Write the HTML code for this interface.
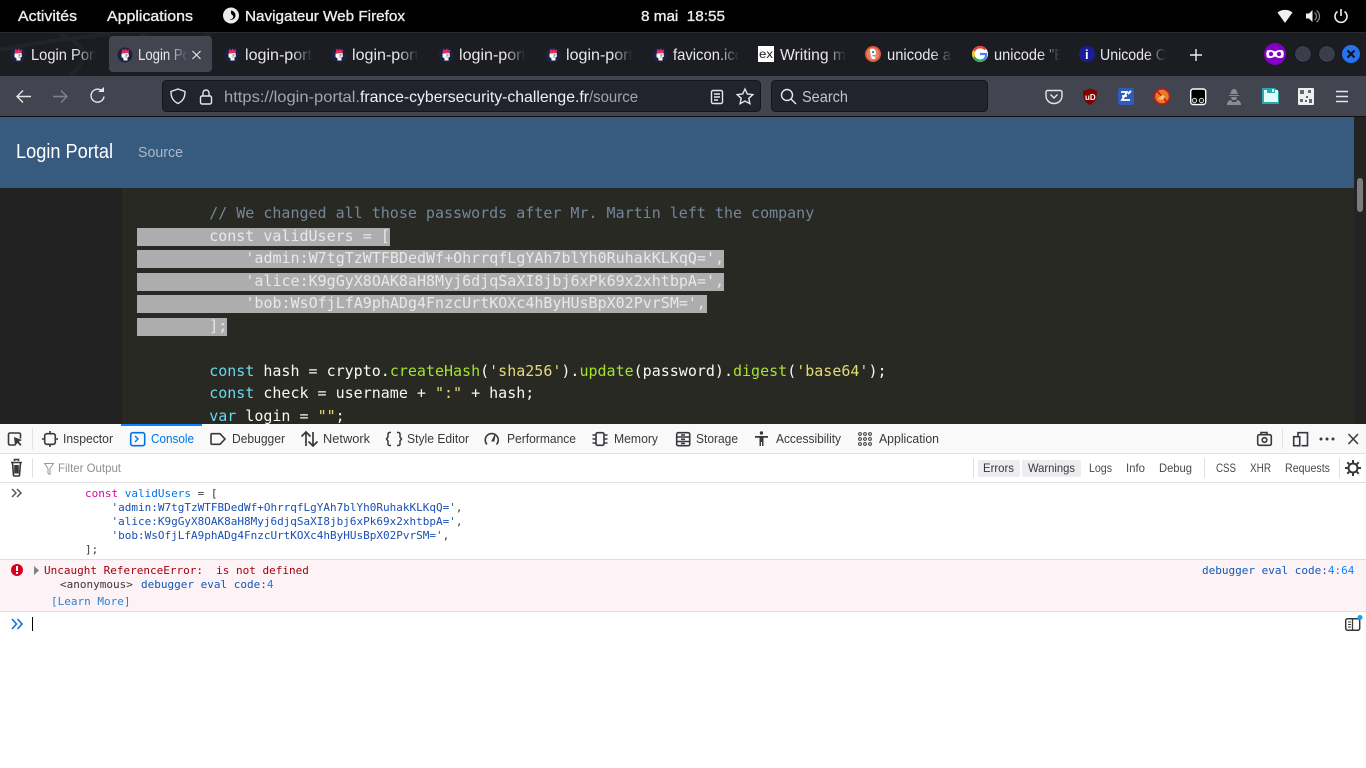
<!DOCTYPE html>
<html><head><meta charset="utf-8"><title>Login Portal</title>
<style>
html,body{margin:0;padding:0;width:1366px;height:768px;overflow:hidden;background:#fff}
svg{display:block}
text{white-space:pre}
.s{font-family:"Liberation Sans",sans-serif}
.top{font-size:15px;fill:#ececec;stroke:#ececec;stroke-width:.35}
.tab{font-size:16px;fill:#e8e8ea}
.dt{font-size:13px;fill:#38383d}
.fl{font-size:12px;fill:#4a4a4f}
.m{font-family:"DejaVu Sans Mono","Liberation Mono",monospace}
.c{font-size:15px;fill:#f8f8f2}
.sel{font-size:15px;fill:#e8e8e8}
.k{fill:#66d9ef}.f{fill:#a6e22e}.y{fill:#e6db74}
.l{font-size:11px;fill:#38383d}
.mg{fill:#dd00a9}.bl{fill:#0074e8}.st{fill:#1a4fb5}.lk{fill:#0e59b8}
.i{fill:none;stroke:#38383d;stroke-width:1.6}
.w{fill:none;stroke:#e6e6e8;stroke-width:1.4}
</style></head><body>
<svg width="1366" height="768" viewBox="0 0 1366 768" xmlns="http://www.w3.org/2000/svg">
<defs>
<symbol id="fav" viewBox="0 0 16 16">
<circle cx="8" cy="8" r="7.500" fill="#1a2244"/>
<path d="M4.500 6L5.500 1.800 7.300 3.500 8.800 1.500 10 3.500 12 2.500 11.500 6.500Z" fill="#ea2c5a"/>
<path d="M4.500 6.500L11.500 6 12 9.500 10.500 10.500 10.500 13.500 6.500 13.500 6.500 11.500 4.500 10Z" fill="#f6f6f6"/>
<path d="M8.500 8h2M8.500 10h1" stroke="#1a2244" stroke-width=".7"/>
</symbol>
<linearGradient id="fd"><stop offset="0" stop-color="#1c1d23" stop-opacity="0"/><stop offset="1" stop-color="#1c1d23"/></linearGradient>
<linearGradient id="fa"><stop offset="0" stop-color="#42454f" stop-opacity="0"/><stop offset="1" stop-color="#42454f"/></linearGradient>
</defs>

<!-- page -->
<rect x="0" y="117" width="1366" height="308" fill="#222"/>
<rect x="122" y="188" width="1232" height="237" fill="#282923"/>
<rect x="0" y="117" width="1354" height="71" fill="#375a7f"/>
<rect x="1354" y="117" width="12" height="308" fill="#232323"/>
<rect x="1357" y="178" width="6" height="34" rx="3" fill="#7c7c7c"/>
<text class="s" x="16" y="158" font-size="20" fill="#fff" textLength="97" lengthAdjust="spacingAndGlyphs">Login Portal</text>
<text class="s" x="138" y="157" font-size="15" fill="#a9b9cb" textLength="45" lengthAdjust="spacingAndGlyphs">Source</text>

<!-- code -->
<rect x="137" y="228" width="253" height="18" fill="#adadad"/>
<rect x="137" y="250" width="587" height="18" fill="#adadad"/>
<rect x="137" y="273" width="587" height="18" fill="#adadad"/>
<rect x="137" y="295" width="570" height="18" fill="#adadad"/>
<rect x="137" y="318" width="90" height="18" fill="#adadad"/>
<text class="m c" x="209.2" y="218" style="fill:#75859a">// We changed all those passwords after Mr. Martin left the company</text>
<text class="m sel" x="209.2" y="241">const validUsers = [</text>
<text class="m sel" x="245.4" y="263">'admin:W7tgTzWTFBDedWf+OhrrqfLgYAh7blYh0RuhakKLKqQ=',</text>
<text class="m sel" x="245.4" y="286">'alice:K9gGyX8OAK8aH8Myj6djqSaXI8jbj6xPk69x2xhtbpA=',</text>
<text class="m sel" x="245.4" y="308">'bob:WsOfjLfA9phADg4FnzcUrtKOXc4hByHUsBpX02PvrSM=',</text>
<text class="m sel" x="209.2" y="331">];</text>
<text class="m c" x="209.2" y="376"><tspan class="k">const</tspan> hash = crypto.<tspan class="f">createHash</tspan>(<tspan class="y">'sha256'</tspan>).<tspan class="f">update</tspan>(password).<tspan class="f">digest</tspan>(<tspan class="y">'base64'</tspan>);</text>
<text class="m c" x="209.2" y="398"><tspan class="k">const</tspan> check = username + <tspan class="y">":"</tspan> + hash;</text>
<text class="m c" x="209.2" y="421"><tspan class="k">var</tspan> login = <tspan class="y">""</tspan>;</text>

<!-- gnome bar -->
<rect width="1366" height="33" fill="#000"/>
<text class="s top" x="18" y="21" textLength="59" lengthAdjust="spacingAndGlyphs">Activités</text>
<text class="s top" x="107" y="21" textLength="86" lengthAdjust="spacingAndGlyphs">Applications</text>
<circle cx="231" cy="15.500" r="8" fill="#ececec"/>
<path d="M231 10.500a5 5 0 0 1 4.500 5.500 4.500 4.500 0 0 1-6 3.500 5 5 0 0 0 3.500-1.500c1-2-1-3.500-2-4z" fill="#000"/>
<text class="s top" x="245" y="21" textLength="160" lengthAdjust="spacingAndGlyphs">Navigateur Web Firefox</text>
<text class="s top" x="641" y="21" textLength="84" lengthAdjust="spacingAndGlyphs">8 mai  18:55</text>
<path d="M1277.500 12.500a12 12 0 0 1 15 0L1285 23z" fill="#f0f0f0"/>
<path d="M1306 13.500h3l3.500-3.500v12l-3.500-3.500h-3z" fill="#f0f0f0"/>
<path d="M1314.500 12.500a4.500 4.500 0 0 1 0 7.500M1316.500 10.500a7 7 0 0 1 0 11.500" fill="none" stroke="#888" stroke-width="1.300"/>
<path d="M1337.500 11.500a6 6 0 1 0 7 0M1341 9v7" fill="none" stroke="#f0f0f0" stroke-width="1.600"/>

<!-- tab bar -->
<rect y="33" width="1366" height="43" fill="#1c1d23"/>
<rect y="32" width="1366" height="1" fill="#2b2c31"/>
<path d="M0 50Q50 40 110 34M70 76Q100 50 60 34M140 34Q180 50 210 34" fill="none" stroke="#232429" stroke-width="4"/>
<rect x="109" y="36" width="103" height="36" rx="4" fill="#42454f"/>
<g class="s tab">
<text x="31" y="60" textLength="67" lengthAdjust="spacingAndGlyphs">Login Port</text>
<text x="138" y="60" textLength="52" lengthAdjust="spacingAndGlyphs">Login Po</text>
<text x="245" y="60" textLength="67" lengthAdjust="spacingAndGlyphs">login-port</text>
<text x="352" y="60" textLength="67" lengthAdjust="spacingAndGlyphs">login-port</text>
<text x="459" y="60" textLength="67" lengthAdjust="spacingAndGlyphs">login-port</text>
<text x="566" y="60" textLength="67" lengthAdjust="spacingAndGlyphs">login-port</text>
<text x="673" y="60" textLength="70" lengthAdjust="spacingAndGlyphs">favicon.ico</text>
<text x="780" y="60" textLength="66" lengthAdjust="spacingAndGlyphs">Writing m</text>
<text x="887" y="60" textLength="64" lengthAdjust="spacingAndGlyphs">unicode a</text>
<text x="994" y="60" textLength="70" lengthAdjust="spacingAndGlyphs">unicode "E</text>
<text x="1100" y="60" textLength="66" lengthAdjust="spacingAndGlyphs">Unicode C</text>
</g>
<!-- fades -->
<rect x="76" y="38" width="20" height="32" fill="url(#fd)"/><rect x="96" y="38" width="13" height="32" fill="#1c1d23"/>
<rect x="168" y="38" width="20" height="32" fill="url(#fa)"/><rect x="188" y="38" width="4" height="32" fill="#42454f"/>
<rect x="292" y="38" width="20" height="32" fill="url(#fd)"/><rect x="312" y="38" width="16" height="32" fill="#1c1d23"/>
<rect x="398" y="38" width="20" height="32" fill="url(#fd)"/><rect x="418" y="38" width="16" height="32" fill="#1c1d23"/>
<rect x="505" y="38" width="20" height="32" fill="url(#fd)"/><rect x="525" y="38" width="16" height="32" fill="#1c1d23"/>
<rect x="612" y="38" width="20" height="32" fill="url(#fd)"/><rect x="632" y="38" width="16" height="32" fill="#1c1d23"/>
<rect x="719" y="38" width="20" height="32" fill="url(#fd)"/><rect x="739" y="38" width="16" height="32" fill="#1c1d23"/>
<rect x="826" y="38" width="20" height="32" fill="url(#fd)"/><rect x="846" y="38" width="14" height="32" fill="#1c1d23"/>
<rect x="932" y="38" width="20" height="32" fill="url(#fd)"/><rect x="952" y="38" width="14" height="32" fill="#1c1d23"/>
<rect x="1040" y="38" width="20" height="32" fill="url(#fd)"/><rect x="1060" y="38" width="14" height="32" fill="#1c1d23"/>
<rect x="1146" y="38" width="20" height="32" fill="url(#fd)"/><rect x="1166" y="38" width="14" height="32" fill="#1c1d23"/>
<path d="M192.500 51l8 8M200.500 51l-8 8" stroke="#e8e8ea" stroke-width="1.100"/>
<use href="#fav" x="10" y="47" width="16" height="16"/>
<use href="#fav" x="117" y="47" width="16" height="16"/>
<use href="#fav" x="224" y="47" width="16" height="16"/>
<use href="#fav" x="331" y="47" width="16" height="16"/>
<use href="#fav" x="438" y="47" width="16" height="16"/>
<use href="#fav" x="545" y="47" width="16" height="16"/>
<use href="#fav" x="652" y="47" width="16" height="16"/>
<rect x="758" y="46" width="16" height="16" fill="#fff"/>
<text class="s" x="759" y="58" font-size="12" fill="#222" textLength="14" lengthAdjust="spacingAndGlyphs">ex</text>
<circle cx="873" cy="54" r="8" fill="#de5833"/><circle cx="873" cy="54" r="6.300" fill="#fff" fill-opacity=".25"/><path d="M870 49q5-1 6 3l-1 7h-3q-2-5-2-10z" fill="#fff"/><circle cx="873" cy="52" r="1" fill="#2d4f8e"/><path d="M872 55h4l-2 2z" fill="#65bc46"/>
<circle cx="980" cy="54" r="8" fill="#fff"/>
<path d="M985.500 49.500A7 7 0 0 0 974 51" fill="none" stroke="#ea4335" stroke-width="2.400"/><path d="M974 51a7 7 0 0 0 0 6" fill="none" stroke="#fbbc05" stroke-width="2.400"/><path d="M974 57a7 7 0 0 0 10 2.500" fill="none" stroke="#34a853" stroke-width="2.400"/><path d="M980 54h6a6 6 0 0 1-2 5.500" fill="none" stroke="#4285f4" stroke-width="2.200"/>
<circle cx="1087" cy="54" r="8" fill="#1b1c99"/>
<text class="s" x="1085" y="59" font-size="13" font-weight="bold" fill="#fff">i</text>
<path d="M1196 49v12M1190 55h12" stroke="#f0f0f0" stroke-width="1.400"/>
<circle cx="1275" cy="54" r="11" fill="#8000c4"/>
<path d="M1267 50.500q4-1.500 8 1 4-2.500 8-1 1.500 3.500 0 7-4 1.500-8-1-4 2.500-8 1-1.500-3.500 0-7z" fill="#fff"/>
<circle cx="1271" cy="54" r="2.200" fill="#8000c4"/><circle cx="1279" cy="54" r="2.200" fill="#8000c4"/>
<circle cx="1303" cy="54" r="8.500" fill="#3a3e4a" stroke="#15161a"/>
<circle cx="1327" cy="54" r="8.500" fill="#3a3e4a" stroke="#15161a"/>
<circle cx="1351" cy="54" r="9" fill="#2673f0"/>
<path d="M1347.500 50.500l7 7M1354.500 50.500l-7 7" stroke="#14151a" stroke-width="2.200"/>

<!-- nav toolbar -->
<rect y="76" width="1366" height="40" fill="#42454f"/>
<rect y="116" width="1366" height="1" fill="#111"/>
<path d="M17 96.500h14M23 90.500l-6 6 6 6" class="w"/>
<path d="M53 96.500h14M61 90.500l6 6-6 6" fill="none" stroke="#80828a" stroke-width="1.400"/>
<path d="M102.500 91.500a6.500 6.500 0 1 0 1.500 5" class="w"/><path d="M98 92h6v-5z" fill="#e6e6e8"/>
<rect x="162.500" y="80.500" width="598" height="31" rx="4" fill="#22242d" stroke="#15161b"/>
<rect x="771.500" y="80.500" width="216" height="31" rx="4" fill="#22242d" stroke="#15161b"/>
<path d="M178 89l7 2.500c0 6-2 9.500-7 12-5-2.500-7-6-7-12z" class="w"/>
<rect x="200.500" y="96" width="11" height="8" rx="1.500" class="w"/><path d="M203 96v-3a3 3 0 0 1 6 0v3" class="w"/>
<text class="s" x="224" y="102" font-size="16" fill="#a3a5ab" textLength="136" lengthAdjust="spacingAndGlyphs">https://login-portal.</text>
<text class="s" x="360" y="102" font-size="16" fill="#f0f0f2" textLength="229" lengthAdjust="spacingAndGlyphs">france-cybersecurity-challenge.fr</text>
<text class="s" x="589" y="102" font-size="16" fill="#a3a5ab" textLength="49" lengthAdjust="spacingAndGlyphs">/source</text>
<rect x="711.500" y="90.500" width="11" height="13" rx="1.500" class="w"/><path d="M714 94h6M714 97h6M714 100h4" class="w" stroke-width="1"/>
<path d="M745 89l2.300 5 5.500.6-4 3.700 1.100 5.400-4.900-2.700-4.900 2.700 1.100-5.400-4-3.700 5.500-.6z" class="w"/>
<circle cx="787" cy="95" r="5.500" class="w"/><path d="M791 99l5 5" class="w"/>
<text class="s" x="802" y="102" font-size="16" fill="#c4c5ca" textLength="46" lengthAdjust="spacingAndGlyphs">Search</text>
<path d="M1047.500 90.500h13a1.500 1.500 0 0 1 1.500 1.500v4a8 7.500 0 0 1-16 0v-4a1.500 1.500 0 0 1 1.500-1.500z" class="w"/><path d="M1050.500 94.500l3.500 3.500 3.500-3.500" class="w"/>
<path d="M1090 88.500l7 2.500c0 7-1.500 11-7 14-5.500-3-7-7-7-14z" fill="#800000"/>
<text class="s" x="1085" y="100" font-size="8" font-weight="bold" fill="#fff">uD</text>
<rect x="1118" y="88" width="16" height="17" rx="2.500" fill="#2e5cb8"/>
<path d="M1121 92h6l-5 8h8M1122 96h5M1128 94l3-3" fill="none" stroke="#fff" stroke-width="1.800"/>
<circle cx="1162" cy="96.500" r="7.500" fill="#e87d1e"/><circle cx="1162" cy="96.500" r="7.500" fill="none" stroke="#c9151e" stroke-width="1.600"/><path d="M1157 91l10 11" stroke="#c9151e" stroke-width="1.600"/><path d="M1158 99l4-4 3 1-2 4z" fill="#f4c27a"/>
<rect x="1190.700" y="89" width="15" height="15.500" rx="2.500" fill="#000" stroke="#fff" stroke-width="1.400"/>
<circle cx="1194.500" cy="100.500" r="2.200" fill="#222" stroke="#ddd"/><circle cx="1201.500" cy="100.500" r="2.200" fill="#222" stroke="#ddd"/>
<path d="M1231 92a3 3 0 0 1 6 0l1 2h-8zM1229 95h10v1h-10zM1231 97h6l-1 3h-4zM1227 105c0-3 2-5 4-5l1 2h4l1-2c2 0 4 2 4 5z" fill="#8a8c90"/>
<path d="M1262 88h13l4 4v12h-17z" fill="#2aa9a9"/><path d="M1264 90h14v12h-14z" fill="#e4fbfb"/><path d="M1267 88h8v5h-8z" fill="#2aa9a9"/><path d="M1272 89h2v3h-2z" fill="#e4fbfb"/>
<rect x="1298" y="88" width="16" height="17" rx="1" fill="#efefef"/>
<path d="M1300 90h4v4h-4zM1308 90h3v3h-3zM1300 99h3v3h-3zM1306 96h2v2h-2zM1309 99h3v4h-3zM1305 100h2v2h-2z" fill="#666"/>
<path d="M1336 91.500h12M1336 96.500h12M1336 101.500h12" stroke="#e6e6e8" stroke-width="1.400"/>

<!-- devtools -->
<rect y="424" width="1366" height="344" fill="#fff"/>
<rect y="424" width="1366" height="29" fill="#f9f9fa"/>
<rect y="453" width="1366" height="1" fill="#e0e0e2"/>
<rect y="482" width="1366" height="1" fill="#e0e0e2"/>
<rect x="121" y="424" width="81" height="2" fill="#0a84ff"/>
<rect x="32" y="428" width="1" height="21" fill="#e0e0e2"/>
<rect x="1282" y="428" width="1" height="21" fill="#e0e0e2"/>
<path d="M15 445h-5a1.500 1.500 0 0 1-1.500-1.500v-9A1.500 1.500 0 0 1 10 433h9a1.500 1.500 0 0 1 1.500 1.500v4" class="i"/>
<path d="M14 437l8 3-3.200 1.600 2.700 3-1.300 1.300-2.700-3L15 446z" fill="#38383d"/>
<rect x="44.700" y="433.700" width="10.600" height="10.600" rx="2" class="i"/><path d="M50 431v2.500M50 444.500v2.500M42 439h2.500M55.500 439H58" class="i"/>
<rect x="130.700" y="432.700" width="14" height="13" rx="2" fill="none" stroke="#0074e8" stroke-width="1.600"/><path d="M135 436l3 3-3 3" fill="none" stroke="#0074e8" stroke-width="1.400"/>
<path d="M212 433.700h8l5 5.300-5 5.300h-8a1 1 0 0 1-1-1v-8.600a1 1 0 0 1 1-1z" class="i"/>
<path d="M306 446v-14M301.500 436.500l4.500-4.500 4.500 4.500M313 432v14M308.500 441.500l4.500 4.500 4.500-4.500" fill="none" stroke="#38383d" stroke-width="1.700"/>
<path d="M391 432.500h-1.500a1.500 1.500 0 0 0-1.500 1.500v3l-1.500 2 1.500 2v3a1.500 1.500 0 0 0 1.500 1.500h1.500M397 432.500h1.500a1.500 1.500 0 0 1 1.500 1.500v3l1.500 2-1.500 2v3a1.500 1.500 0 0 1-1.500 1.500H397" fill="none" stroke="#38383d" stroke-width="1.500"/>
<path d="M487 444.500a6.500 6.500 0 1 1 9.500 0" class="i"/><path d="M492 441l3-6-1 6z" fill="#38383d" stroke="#38383d"/>
<rect x="596" y="432.700" width="8" height="12.600" rx="1.500" class="i"/><path d="M592.500 435h3M592.500 439h3M592.500 443h3M604.500 435h3M604.500 439h3M604.500 443h3" class="i" stroke-width="1.100"/>
<rect x="676.700" y="432.700" width="13" height="13" rx="1.500" class="i"/><path d="M677 437h12.500M677 441.500h12.500M681 435h4M681 439.300h4M681 443.500h4" class="i" stroke-width="1.100"/>
<circle cx="761.500" cy="433" r="1.700" fill="#38383d"/><path d="M755 436h13v1.800h-4.500v8.200h-1.500v-4h-1v4H759.500v-8.200H755z" fill="#38383d"/>
<g fill="none" stroke="#38383d" stroke-width="1"><circle cx="860" cy="434" r="1.400"/><circle cx="865" cy="434" r="1.400"/><circle cx="870" cy="434" r="1.400"/><circle cx="860" cy="439" r="1.400"/><circle cx="865" cy="439" r="1.400"/><circle cx="870" cy="439" r="1.400"/><circle cx="860" cy="444" r="1.400"/><circle cx="865" cy="444" r="1.400"/><circle cx="870" cy="444" r="1.400"/></g>
<g class="s dt">
<text x="63" y="443" textLength="50" lengthAdjust="spacingAndGlyphs">Inspector</text>
<text x="151" y="443" textLength="43" lengthAdjust="spacingAndGlyphs" style="fill:#0074e8">Console</text>
<text x="232" y="443" textLength="53" lengthAdjust="spacingAndGlyphs">Debugger</text>
<text x="323" y="443" textLength="47" lengthAdjust="spacingAndGlyphs">Network</text>
<text x="407" y="443" textLength="62" lengthAdjust="spacingAndGlyphs">Style Editor</text>
<text x="507" y="443" textLength="69" lengthAdjust="spacingAndGlyphs">Performance</text>
<text x="614" y="443" textLength="44" lengthAdjust="spacingAndGlyphs">Memory</text>
<text x="696" y="443" textLength="42" lengthAdjust="spacingAndGlyphs">Storage</text>
<text x="776" y="443" textLength="65" lengthAdjust="spacingAndGlyphs">Accessibility</text>
<text x="879" y="443" textLength="60" lengthAdjust="spacingAndGlyphs">Application</text>
</g>
<rect x="1257.700" y="434.700" width="13.600" height="10.600" rx="1.500" class="i"/><path d="M1261 434.500v-2h6v2" class="i"/><circle cx="1264.500" cy="440" r="2.300" class="i"/>
<rect x="1293.700" y="436.700" width="6" height="9" class="i"/><path d="M1298 436v-3.300h9.500v13h-6" class="i"/>
<circle cx="1321" cy="439" r="1.500" fill="#38383d"/><circle cx="1327" cy="439" r="1.500" fill="#38383d"/><circle cx="1333" cy="439" r="1.500" fill="#38383d"/>
<path d="M1348.500 434l9.500 10M1358 434l-9.500 10" fill="none" stroke="#38383d" stroke-width="1.500"/>

<!-- filter bar -->
<rect x="32" y="458" width="1" height="20" fill="#e0e0e2"/>
<path d="M11 462.500h11M12.500 462.500l1 12.500a1 1 0 0 0 1 1h4a1 1 0 0 0 1-1l1-12.500M14.500 461v-1.500h4v1.500" class="i" stroke-width="1.500"/>
<path d="M15 465v8.500M16.500 465v8.500M18 465v8.500" class="i" stroke-width=".9"/>
<path d="M44.500 463.500h9l-3.500 5v6l-2-1.200v-4.800z" fill="none" stroke="#9a9a9f" stroke-width="1"/>
<text class="s" x="58" y="472" font-size="12" fill="#8f8f94" textLength="63" lengthAdjust="spacingAndGlyphs">Filter Output</text>
<rect x="973" y="458" width="1" height="20" fill="#e0e0e2"/>
<rect x="978" y="460" width="42" height="17" rx="2" fill="#ededf0"/>
<rect x="1022" y="460" width="59" height="17" rx="2" fill="#ededf0"/>
<rect x="1204" y="458" width="1" height="20" fill="#e0e0e2"/>
<rect x="1339" y="458" width="1" height="20" fill="#e0e0e2"/>
<g class="s fl">
<text x="983" y="472" textLength="31" lengthAdjust="spacingAndGlyphs" style="fill:#38383d">Errors</text>
<text x="1028" y="472" textLength="47" lengthAdjust="spacingAndGlyphs" style="fill:#38383d">Warnings</text>
<text x="1089" y="472" textLength="23" lengthAdjust="spacingAndGlyphs">Logs</text>
<text x="1126" y="472" textLength="19" lengthAdjust="spacingAndGlyphs">Info</text>
<text x="1159" y="472" textLength="33" lengthAdjust="spacingAndGlyphs">Debug</text>
<text x="1216" y="472" textLength="20" lengthAdjust="spacingAndGlyphs">CSS</text>
<text x="1250" y="472" textLength="21" lengthAdjust="spacingAndGlyphs">XHR</text>
<text x="1285" y="472" textLength="45" lengthAdjust="spacingAndGlyphs">Requests</text>
</g>
<circle cx="1353" cy="468" r="4.500" fill="none" stroke="#38383d" stroke-width="2"/>
<path d="M1353 460v3M1353 473v3M1345 468h3M1358 468h3M1347.300 462.300l2 2M1356.700 471.700l2 2M1358.700 462.300l-2 2M1349.300 471.700l-2 2" stroke="#38383d" stroke-width="2"/>

<!-- console -->
<path d="M12 489l4 4-4 4M17 489l4 4-4 4" fill="none" stroke="#55555a" stroke-width="1.500"/>
<g class="m l">
<text x="85" y="497"><tspan class="mg">const</tspan> <tspan class="bl">validUsers</tspan> = [</text>
<text x="111.500" y="511"><tspan class="st">'admin:W7tgTzWTFBDedWf+OhrrqfLgYAh7blYh0RuhakKLKqQ='</tspan>,</text>
<text x="111.500" y="525"><tspan class="st">'alice:K9gGyX8OAK8aH8Myj6djqSaXI8jbj6xPk69x2xhtbpA='</tspan>,</text>
<text x="111.500" y="539"><tspan class="st">'bob:WsOfjLfA9phADg4FnzcUrtKOXc4hByHUsBpX02PvrSM='</tspan>,</text>
<text x="85" y="553">];</text>
</g>
<rect y="559" width="1366" height="52" fill="#fdf2f5"/>
<rect y="559" width="1366" height="1" fill="#fbd0d8"/>
<rect y="611" width="1366" height="1" fill="#e0e0e2"/>
<circle cx="17" cy="570" r="6" fill="#d70022"/>
<rect x="16" y="566" width="2" height="5" fill="#fff"/><rect x="16" y="572" width="2" height="2" fill="#fff"/>
<path d="M34 566l5 4.500-5 4.500z" fill="#808085"/>
<g class="m l">
<text x="44" y="574" style="fill:#a4000f">Uncaught ReferenceError:  is not defined</text>
<text x="60" y="588">&lt;anonymous&gt;</text>
<text x="141" y="588" class="lk">debugger eval code:<tspan style="fill:#0a84ff">4</tspan></text>
<text x="51" y="605" style="fill:#2a7fdc">[Learn More]</text>
<text x="1202" y="574" class="lk">debugger eval code:<tspan style="fill:#0a84ff">4:64</tspan></text>
</g>
<path d="M12 619l4.500 5-4.500 5M17.500 619l4.500 5-4.500 5" fill="none" stroke="#0a6fd8" stroke-width="1.600"/>
<rect x="32" y="617" width="1" height="14" fill="#000"/>
<rect x="1345.700" y="618.700" width="14" height="11.600" rx="2" fill="none" stroke="#38383d" stroke-width="1.500"/>
<path d="M1352.500 619v11" stroke="#38383d" stroke-width="1.300"/><path d="M1348 622h3M1348 624.500h3M1348 627h3" stroke="#38383d" stroke-width=".9"/>
<circle cx="1360" cy="617.500" r="2.500" fill="#0ea5f5"/>
</svg>
</body></html>
